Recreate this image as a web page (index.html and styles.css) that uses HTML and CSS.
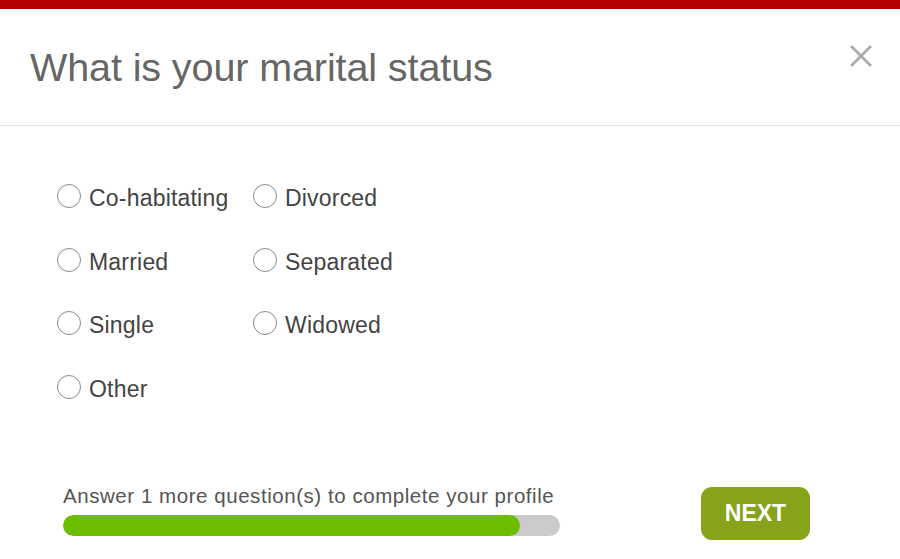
FILE: index.html
```html
<!DOCTYPE html>
<html lang="en">
<head>
<meta charset="utf-8">
<title>Marital status</title>
<link rel="stylesheet" href="styles.css">
</head>
<body>
<div class="modal">
  <div class="topbar"></div>
  <header class="head">
    <h1 class="title">What is your marital status</h1>
    <button class="close" aria-label="Close">
      <svg width="24" height="24" viewBox="0 0 24 24"><path d="M2 2L22 22M22 2L2 22" stroke="#a9a9a9" stroke-width="2.6" fill="none"/></svg>
    </button>
  </header>
  <section class="options">
    <label class="opt"><span class="radio"></span><span class="lbl">Co-habitating</span></label>
    <label class="opt"><span class="radio"></span><span class="lbl">Divorced</span></label>
    <label class="opt"><span class="radio"></span><span class="lbl">Married</span></label>
    <label class="opt"><span class="radio"></span><span class="lbl">Separated</span></label>
    <label class="opt"><span class="radio"></span><span class="lbl">Single</span></label>
    <label class="opt"><span class="radio"></span><span class="lbl">Widowed</span></label>
    <label class="opt"><span class="radio"></span><span class="lbl">Other</span></label>
  </section>
  <footer class="foot">
    <div class="progress">
      <div class="ptext">Answer 1 more question(s) to complete your profile</div>
      <div class="bar"><div class="fill" style="width:92%"></div></div>
    </div>
    <button class="next">NEXT</button>
  </footer>
</div>
</body>
</html>
```
FILE: styles.css
```css
* { box-sizing: border-box; }
html, body { margin: 0; padding: 0; background: #fff; }
body { font-family: "Liberation Sans", Arial, sans-serif; width: 900px; height: 559px; overflow: hidden; }
.topbar { height: 9px; background: #b80000; }
.head {
  height: 117px;
  display: flex;
  justify-content: space-between;
  align-items: center;
  padding: 0 27px 0 30px;
  border-bottom: 1px solid #e2e2e2;
}
.title {
  margin: 0;
  font-weight: normal;
  font-size: 39.5px;
  color: #666;
  letter-spacing: -0.1px;
}
.close {
  align-self: flex-start;
  margin-top: 35px;
  padding: 0;
  border: 0;
  background: none;
  width: 24px;
  height: 24px;
  display: flex;
}
.options {
  display: grid;
  grid-template-columns: 196px auto;
  grid-auto-rows: 63.5px;
  padding: 41px 0 0 57px;
  width: 600px;
}
.opt { display: flex; align-items: center; gap: 8px; }
.radio {
  width: 24px;
  height: 24px;
  border: 1.4px solid #8a8a8a;
  border-radius: 50%;
  margin-bottom: 5px;
  flex: none;
}
.lbl { font-size: 23px; color: #444; letter-spacing: 0.2px; }
.foot {
  display: flex;
  padding: 63px 0 0 63px;
}
.progress { width: 497px; }
.ptext { font-size: 20.5px; color: #555; margin-bottom: 7px; letter-spacing: 0.55px; white-space: nowrap; }
.bar { height: 21px; border-radius: 11px; background: #cbcbcb; overflow: hidden; }
.fill { height: 100%; background: #6cbd00; border-radius: 11px; }
.next {
  margin: 3px 0 0 141px;
  width: 109px;
  height: 53px;
  border: 0;
  border-radius: 11px;
  background: #86a31a;
  color: #fff;
  font-family: "Liberation Sans", Arial, sans-serif;
  font-weight: bold;
  font-size: 23px;
  padding: 0;
}
```
